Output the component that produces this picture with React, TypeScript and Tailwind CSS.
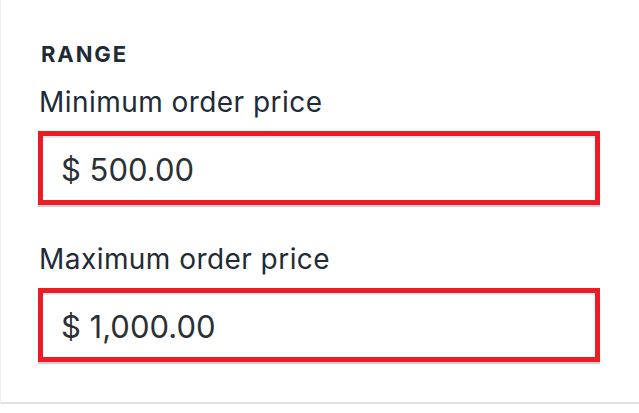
import React from "react";

function Field({ label, value }: { label: string; value: string }) {
  return (
    <div className="flex flex-col">
      <div className="pl-[1px] text-[28px] leading-[32px] text-[#212b36] tracking-[0.45px]">{label}</div>
      <div className="mt-[13px] h-[74px] border-[5px] border-[#ec1c24] bg-white shadow-[0_2px_1px_rgba(145,158,171,0.45)]">
        <div className="h-full border-t-2 border-[#e3e7ee] flex items-center pl-[18px] pt-[2px]">
          <span className="text-[31px] leading-[36px] text-[#2b3035]">{value}</span>
        </div>
      </div>
    </div>
  );
}

export default function App() {
  return (
    <div
      className="w-[639px] h-[413px] bg-white"
      style={{ fontFamily: "Inter, 'Noto Sans', sans-serif" }}
    >
      <div className="h-[404px] border-l border-[#eceef1] border-b-2 border-b-[#dfe3e8] pl-[37px] pr-[39px] pt-[42px]">
        <div className="pl-[3px] text-[22px] leading-[24px] font-bold tracking-[1.9px] text-[#212b36]">RANGE</div>
        <div className="mt-[20px] flex flex-col gap-[38px]">
          <Field label="Minimum order price" value="$ 500.00" />
          <Field label="Maximum order price" value="$ 1,000.00" />
        </div>
      </div>
    </div>
  );
}
